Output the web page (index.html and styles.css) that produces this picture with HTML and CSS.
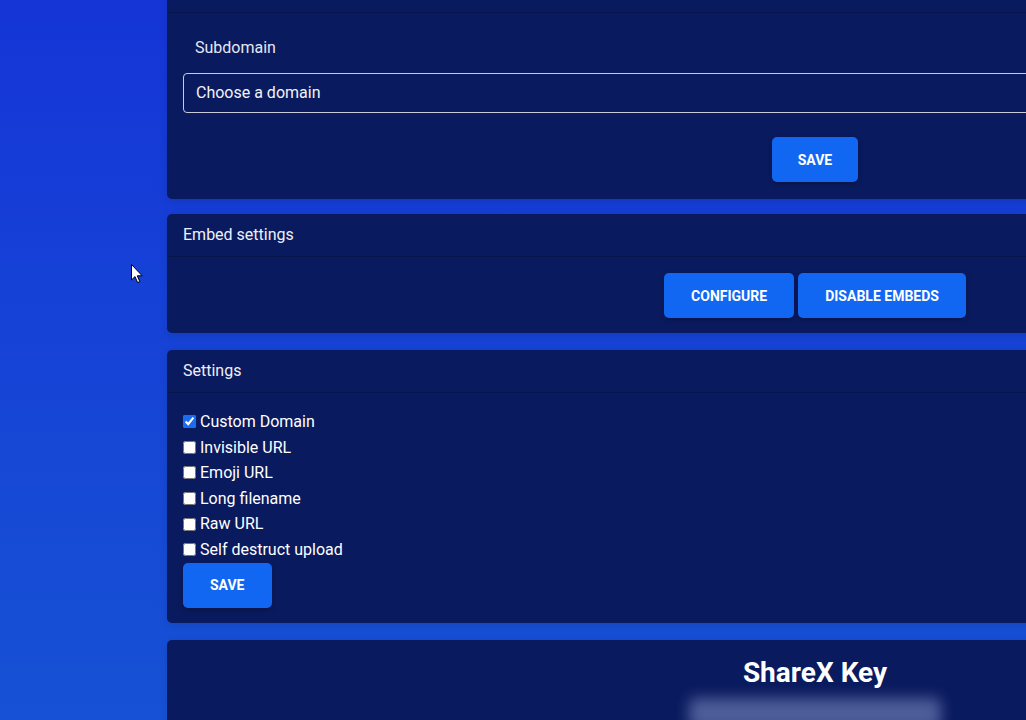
FILE: index.html
```html
<!DOCTYPE html>
<html lang="en">
<head>
<meta charset="utf-8">
<title>Settings</title>
<link rel="stylesheet" href="styles.css">
</head>
<body>
<div class="page">
  <main class="content">
    <section class="card card-first">
      <div class="card-header card-header-scrolled"></div>
      <div class="card-body card-body-domain">
        <label class="field-label">Subdomain</label>
        <div class="select">Choose a domain</div>
        <div class="actions">
          <button class="btn">Save</button>
        </div>
      </div>
    </section>

    <section class="card">
      <div class="card-header">Embed settings</div>
      <div class="card-body card-body-embed">
        <div class="actions actions-tight">
          <button class="btn">Configure</button>
          <button class="btn">Disable embeds</button>
        </div>
      </div>
    </section>

    <section class="card">
      <div class="card-header">Settings</div>
      <div class="card-body card-body-settings">
        <ul class="checks">
          <li><label><input type="checkbox" checked> Custom Domain</label></li>
          <li><label><input type="checkbox"> Invisible URL</label></li>
          <li><label><input type="checkbox"> Emoji URL</label></li>
          <li><label><input type="checkbox"> Long filename</label></li>
          <li><label><input type="checkbox"> Raw URL</label></li>
          <li><label><input type="checkbox"> Self destruct upload</label></li>
        </ul>
        <button class="btn">Save</button>
      </div>
    </section>

    <section class="card">
      <div class="card-body card-body-center">
        <h3 class="key-title">ShareX Key</h3>
        <div class="blurred-key"></div>
      </div>
    </section>
  </main>

  <svg class="cursor" width="13" height="20" viewBox="0 0 13 20" aria-hidden="true">
    <path d="M0.5 0.5 L0.5 16 L4 12.6 L6.6 18.6 L8.8 17.6 L6.3 11.8 L11.2 11.8 Z" fill="#fff" stroke="#000" stroke-width="1" stroke-linejoin="miter"/>
  </svg>
</div>
</body>
</html>
```

FILE: styles.css
```css
html, body {
  margin: 0;
  padding: 0;
  height: 100%;
  overflow: hidden;
}

body {
  font-family: Roboto, "Liberation Sans", Arial, sans-serif;
  color: #fff;
  background: linear-gradient(to bottom, #1535d6 0%, #1644d6 50%, #1652d5 100%);
}

.page {
  position: relative;
  width: 1026px;
  height: 720px;
  overflow: hidden;
}

.content {
  display: flex;
  flex-direction: column;
  gap: 17px;
  padding-left: 167px;
  margin-top: -30px;
}

.card {
  width: 1296px;
  background: #0a1a5e;
  border-radius: 5px;
  box-shadow: 0 2px 8px rgba(0, 0, 0, 0.12);
}

.card-first {
  margin-bottom: -2px;
}

.card-header {
  padding: 10px 16px;
  line-height: 22px;
  font-size: 16px;
  color: #eef0f8;
  border-bottom: 1px solid rgba(0, 0, 0, 0.18);
}

.card-header-scrolled {
  height: 43px;
  box-sizing: border-box;
}

.card-body {
  padding: 15px 16px;
}

.card-body-domain {
  padding-bottom: 17px;
}

.card-body-embed {
  padding-top: 16px;
  padding-bottom: 15px;
}

.card-body-settings {
  padding-top: 16px;
  padding-bottom: 15px;
}

.field-label {
  display: block;
  padding: 8px 12px 4px;
  font-size: 16px;
  line-height: 24px;
  color: #e6e8f2;
}

.select {
  margin-top: 9px;
  height: 40px;
  box-sizing: border-box;
  border: 1px solid #c9cbd6;
  border-radius: 4px;
  padding: 0 12px 2px;
  display: flex;
  align-items: center;
  font-size: 16px;
  color: #f2f3f8;
}

.actions {
  display: flex;
  justify-content: center;
  margin-top: 24px;
}

.actions-tight {
  margin-top: 0;
  gap: 4px;
}

.btn {
  font-family: Roboto, "Liberation Sans", Arial, sans-serif;
  height: 45px;
  padding: 0 27px;
  border: 0;
  border-radius: 5px;
  background: #1267f2;
  color: #fff;
  font-size: 14px;
  font-weight: 700;
  text-transform: uppercase;
  box-shadow: 0 2px 5px rgba(0, 0, 0, 0.25);
  cursor: pointer;
}

.actions .btn:first-child:last-child {
  padding: 0 26px;
}

.checks {
  list-style: none;
  margin: 0;
  padding: 0;
  font-size: 16px;
  line-height: 25.6px;
}

.checks label {
  display: flex;
  align-items: center;
}

.checks input {
  width: 13px;
  height: 13px;
  margin: 0 4px 0 0;
  accent-color: #1a6cf0;
}

.card-body-center {
  display: flex;
  flex-direction: column;
  align-items: center;
  padding-top: 16px;
}

.key-title {
  margin: 0;
  font-size: 28px;
  font-weight: 700;
  line-height: 34px;
}

.blurred-key {
  margin-top: 8px;
  width: 252px;
  height: 32px;
  border-radius: 6px;
  background: rgba(170, 185, 235, 0.42);
  filter: blur(7px);
}

.cursor {
  position: absolute;
  left: 131px;
  top: 264px;
}
```
